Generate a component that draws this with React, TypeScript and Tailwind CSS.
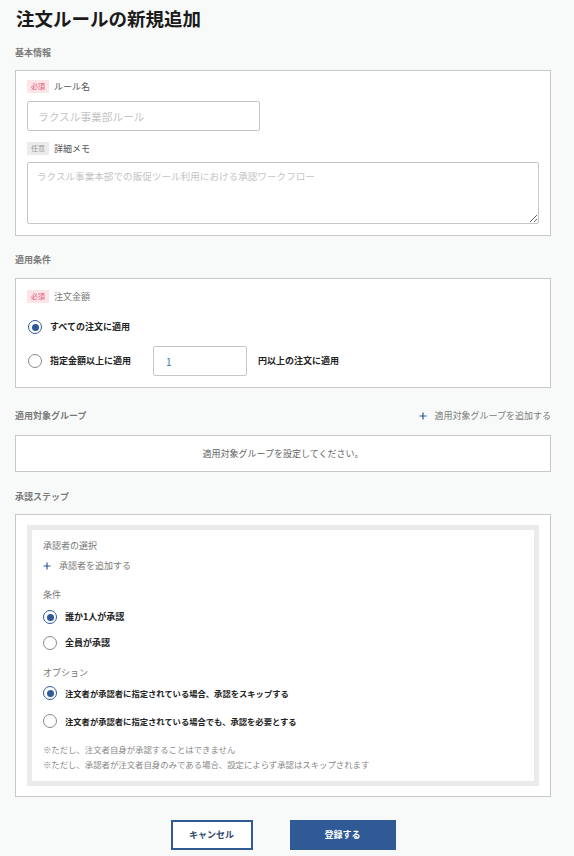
import React, { useState } from 'react';

const Badge: React.FC<{ required?: boolean }> = ({ required }) => (
  <span
    className={
      'inline-flex h-[13px] w-[22px] items-center justify-center text-[7px] ' +
      (required ? 'bg-[#fce4e8] text-[#e0566e]' : 'bg-[#ebebeb] text-[#9a9a9a]')
    }
  >
    {required ? '必須' : '任意'}
  </span>
);

const Radio: React.FC<{ checked: boolean; onClick: () => void; label: string; small?: boolean }> = ({
  checked,
  onClick,
  label,
  small,
}) => (
  <button type="button" onClick={onClick} className="flex h-[14px] items-center gap-[8px] text-left">
    <span
      className={
        'flex h-[14px] w-[14px] shrink-0 items-center justify-center rounded-full border-[1.5px] bg-white ' +
        (checked ? 'border-[#2f5a96]' : 'border-[#8a8a8a]')
      }
    >
      {checked && <span className="h-[7px] w-[7px] rounded-full bg-[#2f5a96]" />}
    </span>
    <span className={(small ? 'text-[8.3px]' : 'text-[9px]') + ' font-bold text-[#222]'}>{label}</span>
  </button>
);

const SectionLabel: React.FC<{ children: React.ReactNode }> = ({ children }) => (
  <div className="flex h-[14px] items-center text-[9px] font-bold text-[#7a7a7a]">{children}</div>
);

const Plus: React.FC = () => (
  <svg width="8" height="8" viewBox="0 0 8 8" className="shrink-0">
    <path d="M4 0.5V7.5M0.5 4H7.5" stroke="#2f5a96" strokeWidth="1.2" />
  </svg>
);

export default function App() {
  const [amountMode, setAmountMode] = useState<'all' | 'min'>('all');
  const [amount, setAmount] = useState('1');
  const [condition, setCondition] = useState<'any' | 'all'>('any');
  const [skip, setSkip] = useState(true);

  return (
    <div className="min-h-[856px] bg-[#f8faf9] px-[15px] font-['Noto_Sans_CJK_JP',sans-serif] text-[#333]">
      <h1 className="flex h-[46px] items-center pl-[1px] pb-[8px] text-[18.5px] font-bold text-[#1a1a1a]">
        注文ルールの新規追加
      </h1>

      {/* 基本情報 */}
      <SectionLabel>基本情報</SectionLabel>
      <div className="mt-[10px] w-[536px] border border-[#c8c8c8] bg-white px-[11px] pt-[9px] pb-[11px]">
        <div className="flex h-[13px] items-center gap-[5px]">
          <Badge required />
          <span className="text-[9px] text-[#555]">ルール名</span>
        </div>
        <input
          className="mt-[8px] h-[30px] w-[233px] rounded-[2px] border border-[#c8c8c8] px-[10px] text-[10.7px] placeholder:text-[#c4c4c4] outline-none"
          placeholder="ラクスル事業部ルール"
        />
        <div className="mt-[11px] flex h-[13px] items-center gap-[5px]">
          <Badge />
          <span className="text-[9px] text-[#555]">詳細メモ</span>
        </div>
        <textarea
          className="mt-[7px] block h-[62px] w-full rounded-[2px] border border-[#c8c8c8] px-[9px] py-[6px] text-[9.6px] placeholder:text-[#c4c4c4] outline-none"
          placeholder="ラクスル事業本部での販促ツール利用における承認ワークフロー"
        />
      </div>

      {/* 適用条件 */}
      <div className="mt-[17px]">
        <SectionLabel>適用条件</SectionLabel>
      </div>
      <div className="mt-[11px] w-[536px] border border-[#c8c8c8] bg-white px-[11px] pt-[11px] pb-[11px]">
        <div className="flex h-[13px] items-center gap-[5px]">
          <Badge required />
          <span className="text-[9px] text-[#777]">注文金額</span>
        </div>
        <div className="mt-[17px] pl-[1px]">
          <Radio checked={amountMode === 'all'} onClick={() => setAmountMode('all')} label="すべての注文に適用" />
        </div>
        <div className="mt-[12px] flex h-[30px] items-center pl-[1px]">
          <div className="w-[125px]">
            <Radio checked={amountMode === 'min'} onClick={() => setAmountMode('min')} label="指定金額以上に適用" />
          </div>
          <input
            value={amount}
            onChange={(e) => setAmount(e.target.value)}
            className="h-[30px] w-[94px] rounded-[2px] border border-[#c8c8c8] px-[12px] text-[10px] text-[#3f74b5] outline-none"
          />
          <span className="ml-[11px] text-[9px] font-bold text-[#222]">円以上の注文に適用</span>
        </div>
      </div>

      {/* 適用対象グループ */}
      <div className="mt-[21px] flex w-[536px] items-center justify-between">
        <SectionLabel>適用対象グループ</SectionLabel>
        <button type="button" className="flex h-[14px] items-center gap-[8px] text-[9px] text-[#7a7a7a]">
          <Plus />
          適用対象グループを追加する
        </button>
      </div>
      <div className="mt-[12px] flex h-[37px] w-[536px] items-center justify-center border border-[#c8c8c8] bg-white text-[9px] text-[#666]">
        適用対象グループを設定してください。
      </div>

      {/* 承認ステップ */}
      <div className="mt-[18px]">
        <SectionLabel>承認ステップ</SectionLabel>
      </div>
      <div className="mt-[10px] w-[536px] border border-[#c8c8c8] bg-white px-[11px] py-[10px]">
        <div className="bg-[#ebebeb] p-[5px]">
          <div className="bg-white px-[11px] pt-[9px] pb-[10px]">
            <div className="flex h-[14px] items-center text-[9px] text-[#777]">承認者の選択</div>
            <button type="button" className="mt-[6px] flex h-[14px] items-center gap-[8px] text-[9px] text-[#7a7a7a]">
              <Plus />
              承認者を追加する
            </button>
            <div className="mt-[15px] flex h-[14px] items-center text-[9px] text-[#777]">条件</div>
            <div className="mt-[8px]">
              <Radio checked={condition === 'any'} onClick={() => setCondition('any')} label="誰か1人が承認" />
            </div>
            <div className="mt-[12px]">
              <Radio checked={condition === 'all'} onClick={() => setCondition('all')} label="全員が承認" />
            </div>
            <div className="mt-[16px] flex h-[14px] items-center text-[9px] text-[#777]">オプション</div>
            <div className="mt-[6px]">
              <Radio
                small
                checked={skip}
                onClick={() => setSkip(true)}
                label="注文者が承認者に指定されている場合、承認をスキップする"
              />
            </div>
            <div className="mt-[14px]">
              <Radio
                small
                checked={!skip}
                onClick={() => setSkip(false)}
                label="注文者が承認者に指定されている場合でも、承認を必要とする"
              />
            </div>
            <div className="mt-[14px] flex h-[14px] items-center text-[8.4px] text-[#888]">
              ※ただし、注文者自身が承認することはできません
            </div>
            <div className="mt-[1px] flex h-[14px] items-center text-[8.4px] text-[#888]">
              ※ただし、承認者が注文者自身のみである場合、設定によらず承認はスキップされます
            </div>
          </div>
        </div>
      </div>

      {/* ボタン */}
      <div className="mt-[23px] flex w-[536px] justify-center gap-[37px] pb-[7px]">
        <button
          type="button"
          className="h-[30px] w-[82px] border-2 border-[#2f5a96] bg-white text-[9px] font-bold text-[#2f4a6e]"
        >
          キャンセル
        </button>
        <button type="button" className="h-[30px] w-[106px] bg-[#2f5a96] text-[9px] font-bold text-white">
          登録する
        </button>
      </div>
    </div>
  );
}
